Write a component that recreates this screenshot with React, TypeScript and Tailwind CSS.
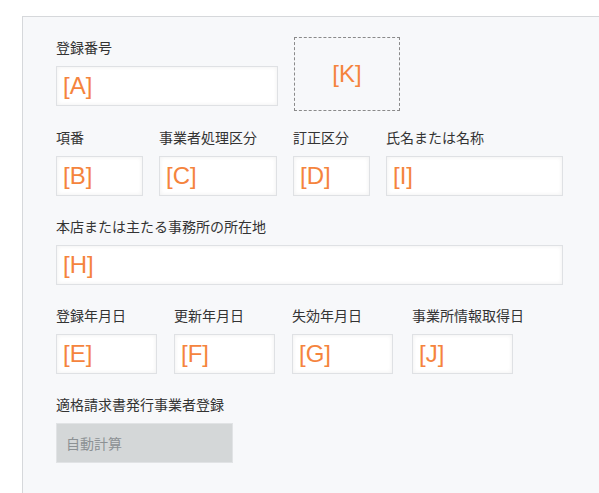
import React from "react";

const labelFont = {
  fontFamily: '"Noto Sans CJK JP", "Noto Sans", sans-serif',
};

function Field({
  label,
  code,
  width,
  className = "",
}: {
  label: string;
  code: string;
  width: string;
  className?: string;
}) {
  return (
    <div className={`flex flex-col ${className}`}>
      <div
        className="mb-[9px] h-[20px] whitespace-nowrap text-[14px] leading-[20px] text-[#333333]"
        style={labelFont}
      >
        {label}
      </div>
      <div
        className={`${width} flex h-[40px] items-center border border-[#dfe1e4] bg-white px-[6px] shadow-[inset_0_0_4px_rgba(0,0,0,0.07)]`}
      >
        <span className="font-['Liberation_Sans',Arial,sans-serif] text-[24px] leading-none text-[#f5843d]">
          {code}
        </span>
      </div>
    </div>
  );
}

export default function App() {
  return (
    <div className="h-[493px] w-[599px] overflow-hidden bg-white pl-[22px] pt-[16px]">
      <div className="min-h-[520px] w-[620px] border-l border-t border-[#d6d8db] bg-[#f7f8fa] pl-[33px] pt-[20px]">
        <div className="flex flex-col gap-[20px]">
          {/* row 1 */}
          <div className="flex items-start gap-[16px]">
            <Field label="登録番号" code="[A]" width="w-[222px]" />
            <div className="-mb-[5px] flex h-[74px] w-[106px] items-center justify-center border border-dashed border-[#8a8a8a]">
              <span className="font-['Liberation_Sans',Arial,sans-serif] text-[24px] leading-none text-[#f5843d]">
                [K]
              </span>
            </div>
          </div>

          {/* row 2 */}
          <div className="mt-[1px] flex gap-[16px]">
            <Field label="項番" code="[B]" width="w-[87px]" />
            <Field label="事業者処理区分" code="[C]" width="w-[118px]" />
            <Field label="訂正区分" code="[D]" width="w-[77px]" />
            <Field label="氏名または名称" code="[I]" width="w-[177px]" />
          </div>

          {/* row 3 */}
          <Field
            label="本店または主たる事務所の所在地"
            code="[H]"
            width="w-[507px]"
          />

          {/* row 4 */}
          <div className="flex gap-[17px]">
            <Field label="登録年月日" code="[E]" width="w-[101px]" />
            <Field label="更新年月日" code="[F]" width="w-[101px]" />
            <Field label="失効年月日" code="[G]" width="w-[101px]" />
            <Field
              label="事業所情報取得日"
              code="[J]"
              width="w-[101px]"
              className="ml-[2px]"
            />
          </div>

          {/* row 5 */}
          <div className="flex flex-col">
            <div
              className="mb-[9px] h-[20px] text-[14px] leading-[20px] text-[#333333]"
              style={labelFont}
            >
              適格請求書発行事業者登録
            </div>
            <div className="flex h-[40px] w-[177px] items-center border border-[#e1e3e5] bg-[#d4d7d8] pl-[9px]">
              <span
                className="text-[14px] text-[#8c9194]"
                style={labelFont}
              >
                自動計算
              </span>
            </div>
          </div>
        </div>
      </div>
    </div>
  );
}
